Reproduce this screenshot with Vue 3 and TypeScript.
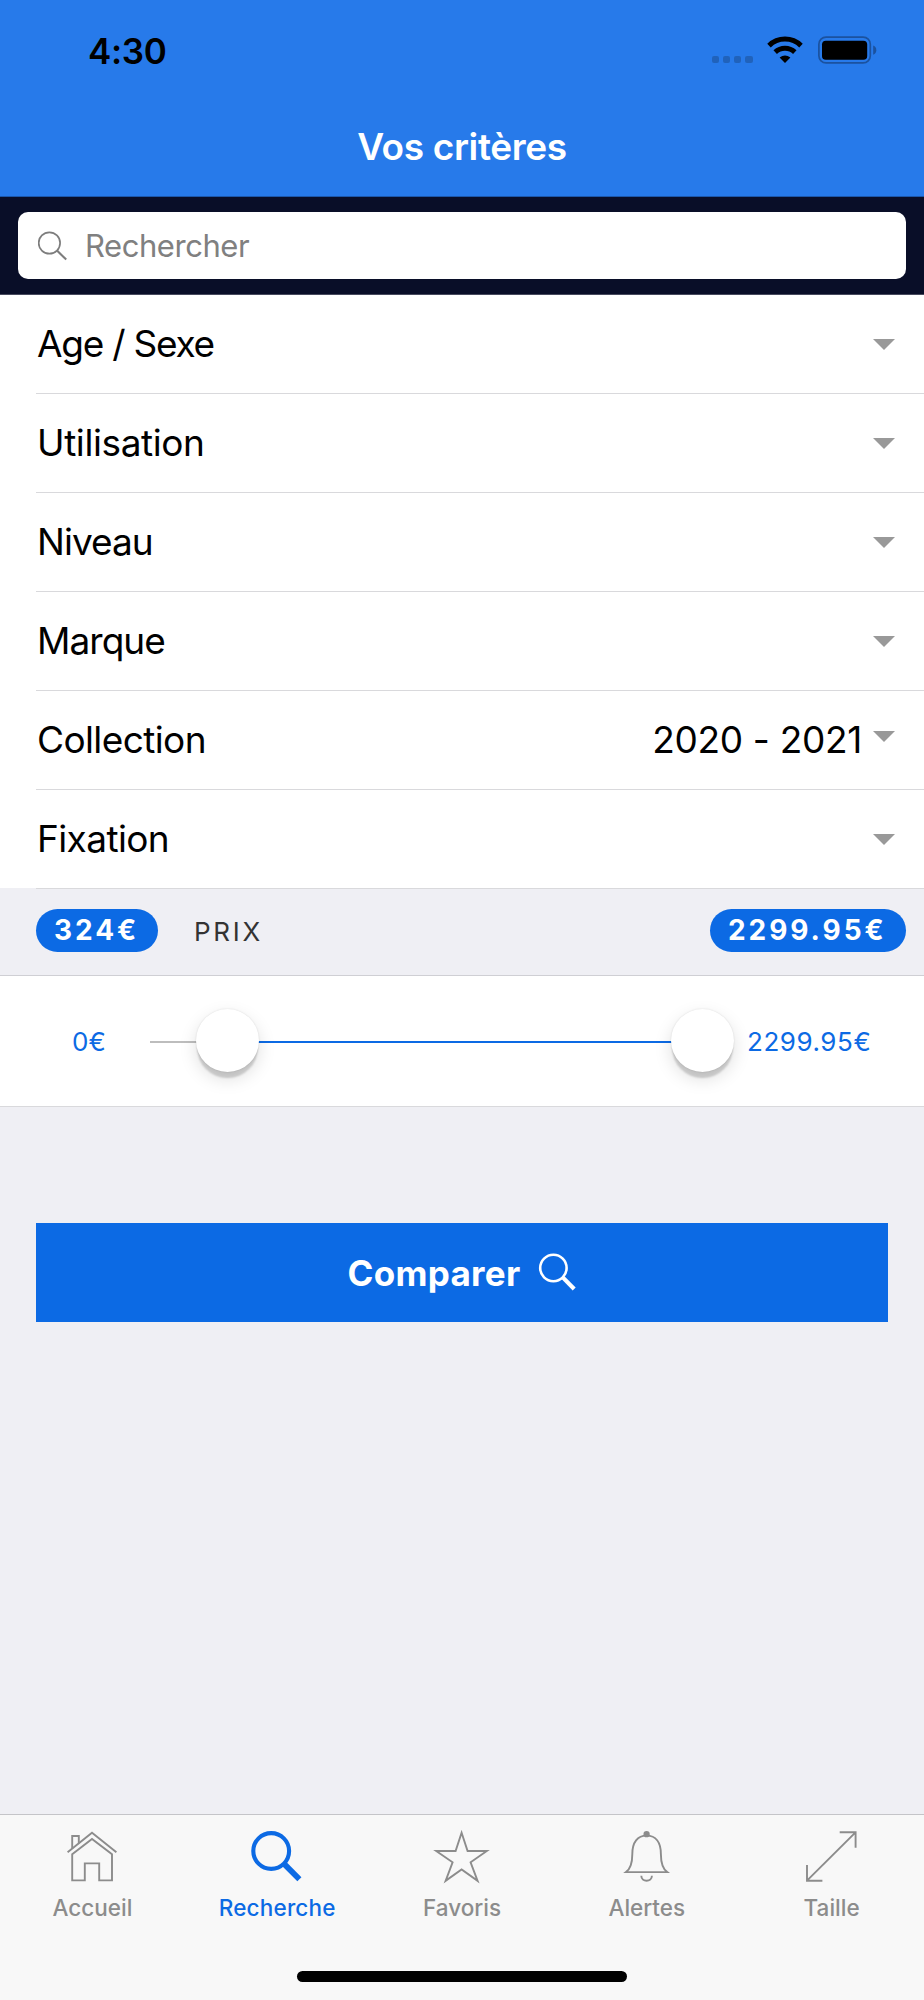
<script setup lang="ts">
interface Criterion {
  label: string
  value?: string
}

interface Tab {
  id: string
  label: string
  active?: boolean
}

const criteria: Criterion[] = [
  { label: 'Age / Sexe' },
  { label: 'Utilisation' },
  { label: 'Niveau' },
  { label: 'Marque' },
  { label: 'Collection', value: '2020 - 2021' },
  { label: 'Fixation' },
]

const tabs: Tab[] = [
  { id: 'home', label: 'Accueil' },
  { id: 'search', label: 'Recherche', active: true },
  { id: 'star', label: 'Favoris' },
  { id: 'bell', label: 'Alertes' },
  { id: 'size', label: 'Taille' },
]

const price = { min: '0€', low: '324€', high: '2299.95€', max: '2299.95€' }
const range = { start: 14.09, end: 100 }
</script>

<template>
  <div class="screen">
    <header class="top">
      <div class="status">
        <span class="time">4:30</span>
        <div class="indicators">
          <div class="dots"><i v-for="n in 4" :key="n"></i></div>
          <svg class="wifi" width="36" height="27" viewBox="0 0 36 27">
            <g fill="none" stroke="#000" stroke-width="5">
              <path d="M2 9.6A23 23 0 0 1 34 9.6" />
              <path d="M8.2 16.1A14.3 14.3 0 0 1 27.8 16.1" />
            </g>
            <path d="M12.6 21.6Q18 17.2 23.4 21.6L18 27Z" />
          </svg>
          <svg class="battery" width="60" height="28" viewBox="0 0 60 28">
            <rect x="0.9" y="1.1" width="51.4" height="25.8" rx="7.2" fill="none" stroke="#1b529f" stroke-width="1.7" />
            <rect x="4" y="4.8" width="45.2" height="19" rx="3.8" />
            <path d="M55.2 9.6Q58.3 11 58.3 14.2T55.2 18.8Z" fill="#1b529f" />
          </svg>
        </div>
      </div>
      <h1 class="title">Vos critères</h1>
    </header>

    <div class="searchbar">
      <label class="field">
        <svg width="30" height="30" viewBox="0 0 30 30" fill="none" stroke="#7d7d7d">
          <circle cx="11.4" cy="12" r="10.7" stroke-width="1.7" />
          <path d="M19 19.6L28.2 28.6" stroke-width="2.1" />
        </svg>
        <span class="placeholder">Rechercher</span>
      </label>
    </div>

    <ul class="criteria">
      <li v-for="c in criteria" :key="c.label">
        <span class="label">{{ c.label }}</span>
        <span v-if="c.value" class="value">{{ c.value }}</span>
        <i class="caret" :class="{ raised: c.value }"></i>
      </li>
    </ul>

    <div class="price-head">
      <span class="chip low">{{ price.low }}</span>
      <span class="prix">PRIX</span>
      <span class="chip high">{{ price.high }}</span>
    </div>

    <div class="price-range">
      <span class="bound min">{{ price.min }}</span>
      <div class="track">
        <div class="fill" :style="{ left: range.start + '%', right: 100 - range.end + '%' }"></div>
        <div class="knob" :style="{ left: range.start + '%' }"></div>
        <div class="knob" :style="{ left: range.end + '%' }"></div>
      </div>
      <span class="bound max">{{ price.max }}</span>
    </div>

    <main class="body">
      <button class="compare" type="button">
        <span>Comparer</span>
        <svg width="38" height="40" viewBox="0 0 38 40" fill="none" stroke="#fff">
          <circle cx="15.4" cy="15" r="13.2" stroke-width="2.6" />
          <path d="M25 24.6L36.2 36" stroke-width="4.2" />
        </svg>
      </button>
    </main>

    <nav class="tabs">
      <div class="tab-row">
        <a v-for="t in tabs" :key="t.id" class="tab" :class="[t.id, { active: t.active }]">
          <svg width="60" height="60" viewBox="0 0 60 60" fill="none" stroke="currentColor" stroke-width="1.9">
            <template v-if="t.id === 'home'">
              <path d="M5.6 25.2L30 5.8L54.4 25.2" />
              <path d="M10.2 27.2L30 11.9L50 27.2V53.4H37.2V36.4H22.8V53.4H10.2Z" />
              <path d="M10.2 21.4V9H16.8V16.3" />
            </template>
            <template v-else-if="t.id === 'search'">
              <circle cx="24.2" cy="24" r="17.9" stroke-width="4.1" />
              <path d="M36.6 36.4L52.4 52.2" stroke-width="5.8" />
            </template>
            <path
              v-else-if="t.id === 'star'"
              stroke-miterlimit="10"
              d="M29.6 5.8L35.6 24H54.8L38.6 35.3L45.6 53.8L29.6 42.4L13.6 53.8L20.6 35.3L4.2 24H23.6Z"
            />
            <template v-else-if="t.id === 'bell'">
              <path d="M9 45.1C14.4 41 15.3 35 15.3 27.2C15.3 15 20.6 8.6 29.6 8.6S43.9 15 43.9 27.2C43.9 35 44.8 41 50.2 45.1Z" />
              <circle cx="29.6" cy="7.2" r="2.2" fill="currentColor" />
              <path d="M24.3 48.7C24.3 55.4 34.9 55.4 34.9 48.7" />
            </template>
            <path v-else d="M5 53.6L53.5 5.3M37.7 5.3H53.6V20.7M5 38V53.7H20.4" />
          </svg>
          <span>{{ t.label }}</span>
        </a>
      </div>
      <div class="home-indicator"></div>
    </nav>
  </div>
</template>

<style>
body {
  margin: 0;
}
</style>

<style scoped>
* {
  box-sizing: border-box;
}

.screen {
  display: flex;
  flex-direction: column;
  width: 924px;
  height: 2000px;
  overflow: hidden;
  background: #efeff4;
  color: #000;
  font-family: Inter, 'Liberation Sans', sans-serif;
  white-space: nowrap;
}

.top {
  height: 197px;
  background: #277aea;
  border-bottom: 1px solid #1b57ab;
}

.status {
  display: flex;
  justify-content: space-between;
  height: 101px;
  padding: 0 46px 0 88px;
}

.time {
  font-size: 35px;
  font-weight: 600;
  letter-spacing: -0.3px;
  line-height: 103px;
}

.indicators {
  display: flex;
  align-items: flex-start;
  padding-top: 36px;
}

.dots {
  display: flex;
  gap: 3.7px;
  margin: 20px 14.5px 0 0;
}

.dots i {
  width: 7.4px;
  height: 7.4px;
  border-radius: 2px;
  background: #2062bb;
}

.wifi {
  margin-right: 15px;
}

.title {
  margin: 0;
  color: #fff;
  font-size: 37px;
  font-weight: 600;
  letter-spacing: -0.35px;
  line-height: 92px;
  text-align: center;
}

.searchbar {
  height: 98px;
  padding: 15px 18px 0;
  background: #090e28;
  border-bottom: 1px solid #474a5e;
}

.field {
  display: flex;
  align-items: center;
  height: 67px;
  padding: 0 20px;
  border-radius: 10px;
  background: #fff;
}

.placeholder {
  margin-left: 17px;
  color: #808080;
  font-size: 31px;
  letter-spacing: -0.45px;
}

.criteria {
  margin: 0;
  padding: 0 0 0 36px;
  list-style: none;
  background: linear-gradient(90deg, #efeff4, #efeff4) 0 100% / 100% 1px no-repeat #fff;
}

.criteria li {
  display: flex;
  align-items: center;
  height: 99px;
  padding-right: 29px;
  border-bottom: 1px solid #d9d9dc;
  font-size: 37px;
}

.label {
  flex: 1;
  padding: 0 0 2px 1px;
  letter-spacing: -0.6px;
}

.criteria li:nth-child(1) .label {
  letter-spacing: -1.25px;
}

.criteria li:nth-child(2) .label {
  letter-spacing: -0.4px;
}

.criteria li:nth-child(3) .label,
.criteria li:nth-child(4) .label {
  letter-spacing: -0.95px;
}

.value {
  margin-right: 11px;
  padding-bottom: 2px;
  letter-spacing: -0.3px;
}

.caret {
  border: 11px solid transparent;
  border-top-color: #999;
  border-bottom: 0;
}

.caret.raised {
  margin-bottom: 8px;
}

.price-head {
  display: flex;
  align-items: center;
  height: 87px;
  padding: 0 18px 4px 36px;
  border-bottom: 1px solid #cfcfd4;
}

.chip {
  height: 43px;
  padding-left: 18px;
  border-radius: 22px;
  background: #0c6ae4;
  color: #fff;
  font-size: 28px;
  font-weight: 700;
  letter-spacing: 2.95px;
  line-height: 43px;
}

.chip.low {
  width: 122px;
}

.chip.high {
  width: 196px;
  margin-left: auto;
}

.prix {
  margin-left: 36px;
  padding-top: 2px;
  color: #333;
  font-size: 26px;
  letter-spacing: 2.7px;
}

.price-range {
  display: flex;
  align-items: center;
  height: 131px;
  border-bottom: 1px solid #d9d9dc;
  background: #fff;
  color: #0c6ae4;
  font-size: 26px;
}

.min {
  width: 78px;
  margin-left: 72px;
}

.track {
  position: relative;
  width: 553px;
  height: 2px;
  margin-top: 2px;
  background: #bdbdbd;
}

.fill {
  position: absolute;
  top: 0;
  height: 2px;
  background: #0c6ae4;
}

.knob {
  position: absolute;
  top: -32px;
  width: 63px;
  height: 63px;
  margin-left: -32px;
  border-radius: 50%;
  background: #fff;
  box-shadow: 0 7px 2px -1px rgba(0, 0, 0, 0.16), 0 7px 18px rgba(0, 0, 0, 0.13), 0 0 2px rgba(0, 0, 0, 0.12);
}

.max {
  margin-left: 44px;
  letter-spacing: 0.55px;
}

.body {
  flex: 1;
  padding: 116px 36px 0;
}

.compare {
  display: flex;
  align-items: center;
  justify-content: center;
  gap: 18px;
  width: 100%;
  height: 99px;
  padding: 0;
  border: 0;
  background: #0c6ae4;
  color: #fff;
  font: 700 35px Inter, 'Liberation Sans', sans-serif;
  letter-spacing: 0.3px;
}

.tabs {
  height: 186px;
  border-top: 1px solid #c4c4c8;
  background: #f8f8f8;
}

.tab-row {
  display: grid;
  grid-template-columns: repeat(5, 1fr);
  height: 156px;
}

.tab {
  display: flex;
  flex-direction: column;
  align-items: center;
  padding-top: 12px;
  color: #8c8c8c;
  font-size: 22.5px;
  font-weight: 500;
}

.tab span {
  line-height: 41px;
}

.tab.active {
  color: #0c6ae4;
  letter-spacing: 0.2px;
}

.home-indicator {
  width: 330px;
  height: 11px;
  margin: 0 auto;
  border-radius: 6px;
  background: #000;
}
</style>
